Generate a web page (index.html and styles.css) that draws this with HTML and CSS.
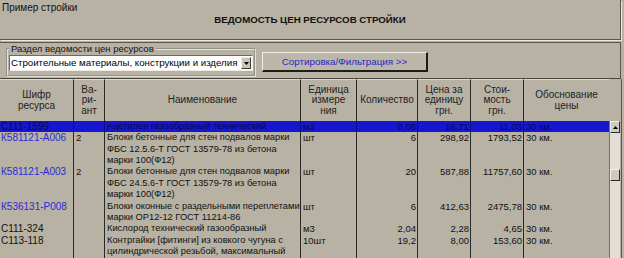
FILE: index.html
```html
<!DOCTYPE html>
<html lang="ru">
<head>
<meta charset="utf-8">
<title>Ведомость цен ресурсов стройки</title>
<link rel="stylesheet" href="styles.css">
</head>
<body>
<div class="top-panel">
  <div class="project">Пример стройки</div>
  <div class="title">ВЕДОМОСТЬ ЦЕН РЕСУРСОВ СТРОЙКИ</div>
</div>
<div class="controls">
  <fieldset class="section">
    <legend>Раздел ведомости цен ресурсов</legend>
    <div class="select">
      <span class="select-text">Строительные материалы, конструкции и изделия</span>
      <span class="select-arrow"><svg width="5" height="3" viewBox="0 0 5 3"><path d="M0 0h5L2.5 3z" fill="#000"/></svg></span>
    </div>
  </fieldset>
  <button class="sort-btn" type="button">Сортировка/Фильтрация &gt;&gt;</button>
</div>
<div class="grid">
  <table class="prices">
    <colgroup>
      <col class="c-code"><col class="c-var"><col class="c-name"><col class="c-unit"><col class="c-qty"><col class="c-price"><col class="c-cost"><col class="c-basis">
    </colgroup>
    <thead>
      <tr>
        <th>Шифр<br>ресурса</th>
        <th>Ва-<br>ри-<br>ант</th>
        <th>Наименование</th>
        <th>Единица<br>измере<br>ния</th>
        <th>Количество</th>
        <th>Цена за<br>единицу<br>грн.</th>
        <th>Стои-<br>мость<br>грн.</th>
        <th class="last">Обоснование<br>цены</th>
      </tr>
    </thead>
    <tbody>
      <tr class="selected">
        <td class="code">С111-1599</td><td></td><td class="name">Ацетилен газообразный технический</td><td>м3</td><td class="num">0,06</td><td class="num">16,71</td><td class="num">11,03</td><td class="last">30 км.</td>
      </tr>
      <tr>
        <td class="code link">К581121-А006</td><td>2</td><td class="name">Блоки бетонные для стен подвалов марки<br>ФБС 12.5.6-Т ГОСТ 13579-78 из бетона<br>марки 100(Ф12)</td><td>шт</td><td class="num">6</td><td class="num">298,92</td><td class="num">1793,52</td><td class="last">30 км.</td>
      </tr>
      <tr>
        <td class="code link">К581121-А003</td><td>2</td><td class="name">Блоки бетонные для стен подвалов марки<br>ФБС 24.5.6-Т ГОСТ 13579-78 из бетона<br>марки 100(Ф12)</td><td>шт</td><td class="num">20</td><td class="num">587,88</td><td class="num">11757,60</td><td class="last">30 км.</td>
      </tr>
      <tr>
        <td class="code link">К536131-Р008</td><td></td><td class="name">Блоки оконные с раздельными переплетами<br>марки ОР12-12 ГОСТ 11214-86</td><td>шт</td><td class="num">6</td><td class="num">412,63</td><td class="num">2475,78</td><td class="last">30 км.</td>
      </tr>
      <tr>
        <td class="code">С111-324</td><td></td><td class="name">Кислород технический газообразный</td><td>м3</td><td class="num">2,04</td><td class="num">2,28</td><td class="num">4,65</td><td class="last">30 км.</td>
      </tr>
      <tr>
        <td class="code">С113-118</td><td></td><td class="name">Контргайки [фитинги] из ковкого чугуна с<br>цилиндрической резьбой, максимальный<br>условный проход 15 мм</td><td>10шт</td><td class="num">19,2</td><td class="num">8,00</td><td class="num">153,60</td><td class="last">30 км.</td>
      </tr>
    </tbody>
  </table>
  <div class="scrollbar">
    <div class="sb-btn"><svg width="5" height="3" viewBox="0 0 5 3"><path d="M0 3h5L2.5 0z" fill="#000"/></svg></div>
    <div class="sb-thumb"></div>
  </div>
</div>
</body>
</html>
```
FILE: styles.css
```css
html, body {
  margin: 0;
  padding: 0;
  width: 624px;
  height: 258px;
  overflow: hidden;
  background: #b8b2a4;
  font-family: "Liberation Sans", Arial, sans-serif;
  font-size: 9.5px;
  color: #111;
}

.top-panel {
  box-sizing: border-box;
  width: 621px;
  height: 40px;
  padding-top: 2px;
  border-right: 1px solid #5b564c;
  border-bottom: 1px solid #5b564c;
  box-shadow: 1px 1px 0 #ebe7de;
}

.project {
  padding-left: 2px;
  font-size: 10px;
  line-height: 12px;
}

.title {
  text-align: center;
  font-weight: bold;
  font-size: 9.7px;
  line-height: 11px;
}

.controls {
  box-sizing: border-box;
  width: 621px;
  height: 37px;
  margin-top: 2px;
  border-top: 1px solid #5b564c;
  border-right: 1px solid #5b564c;
  border-bottom: 1px solid #4a463e;
  display: flex;
  align-items: flex-start;
}

.section {
  box-sizing: border-box;
  width: 250px;
  margin: 0 0 0 6px;
  padding: 1px 1px 4px 1px;
  border: 2px groove #e6e2d8;
  min-width: 0;
}

.section legend {
  padding: 0 2px;
  font-size: 9.5px;
  line-height: 11px;
  color: #111;
}

.select {
  box-sizing: border-box;
  height: 16px;
  background: #fff;
  border: 1px solid;
  border-color: #6f6a60 #efece5 #efece5 #6f6a60;
  display: flex;
  align-items: center;
  justify-content: space-between;
  padding: 0 1px;
}

.select-text {
  line-height: 14px;
  font-size: 9.7px;
  white-space: nowrap;
  color: #000;
}

.select-arrow {
  box-sizing: border-box;
  width: 10px;
  height: 12px;
  background: #c9c4b8;
  border: 1px solid;
  border-color: #efece5 #3c3a35 #3c3a35 #efece5;
  display: flex;
  align-items: center;
  justify-content: center;
}

.select-arrow svg { display: block; }

.sort-btn {
  box-sizing: border-box;
  width: 166px;
  height: 20px;
  margin: 9px 0 0 6px;
  padding: 0;
  background: #bdb7a9;
  border-style: solid;
  border-width: 1px 2px 2px 1px;
  border-color: #f1eee7 #1e1c19 #1e1c19 #f1eee7;
  font-family: "Liberation Sans", Arial, sans-serif;
  font-size: 9.8px;
  color: #2626c8;
}

.grid {
  display: flex;
  align-items: flex-start;
  width: 621px;
  border-right: 1px solid #5b564c;
}

.prices {
  border-collapse: separate;
  border-spacing: 0;
  table-layout: fixed;
  width: 609px;
  flex: none;
}

.c-code { width: 74px; }
.c-var { width: 31px; }
.c-name { width: 196px; }
.c-unit { width: 56px; }
.c-qty { width: 61px; }
.c-price { width: 53px; }
.c-cost { width: 53px; }
.c-basis { width: 85px; }

.prices th {
  height: 41px;
  padding: 0 1px;
  font-weight: normal;
  font-size: 10px;
  line-height: 10.5px;
  color: #222;
  vertical-align: middle;
  text-align: center;
  border-right: 1px solid #2b2925;
  border-top: 1px solid #ddd9cf;
}

.prices td {
  padding: 0 2px;
  line-height: 11.36px;
  vertical-align: top;
  text-align: left;
  border-right: 1px solid #2b2925;
  color: #111;
  overflow: hidden;
  white-space: nowrap;
}

.prices td.code {
  font-size: 10px;
  padding-left: 1px;
}

.prices td.name {
  font-size: 9.3px;
  padding: 0 1px 0 2px;
}

.prices th.last,
.prices td.last {
  border-right: none;
}

.prices td.num {
  text-align: right;
  padding-right: 1px;
}

.prices td.link {
  color: #2a2ad4;
}

.prices tr.selected td {
  background: #1616d0;
  color: #0a0a45;
  border-right-color: #0d0d7a;
}

.scrollbar {
  box-sizing: border-box;
  width: 11px;
  margin-top: 42px;
  height: 220px;
  background: #e2ded5;
  border-left: 1px solid #77726a;
  display: flex;
  flex-direction: column;
}

.sb-btn,
.sb-thumb {
  box-sizing: border-box;
  width: 10px;
  height: 12px;
  background: #cfcabe;
  border: 1px solid;
  border-color: #f4f1ea #2e2c28 #2e2c28 #f4f1ea;
}

.sb-btn {
  display: flex;
  align-items: center;
  justify-content: center;
}

.sb-btn svg { display: block; }

.sb-thumb {
  margin-top: 36px;
}
```
